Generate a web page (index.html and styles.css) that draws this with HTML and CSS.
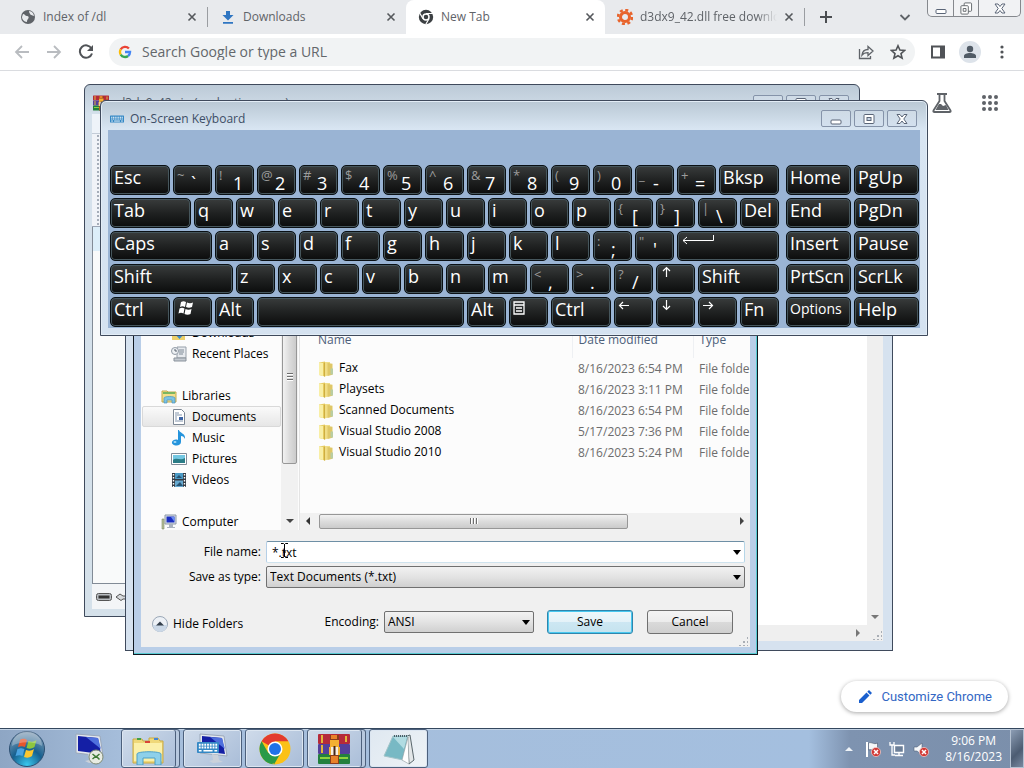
FILE: index.html
```
<!DOCTYPE html>
<html lang="en">
<head>
  <meta charset="UTF-8">
  <meta name="viewport" content="width=device-width, initial-scale=1.0">
  <title>New Tab</title>
  <link rel="stylesheet" href="styles.css">
</head>
<body>
  <!-- shared icons -->
  <svg class="sprite" aria-hidden="true">
    <symbol id="close" viewBox="0 0 10 10"><path d="M1.5 1.5l7 7M8.5 1.5l-7 7" stroke="#55585c" stroke-width="1.6"/></symbol>
    <symbol id="folder" viewBox="0 0 16 16">
      <path d="M1 1.500l6-1v15L1 14z" fill="#e6cc62"/>
      <path d="M1 1.500l4 .5v13L1 14z" fill="#f9efa6"/>
      <path d="M6.500 1H12v13l-5.500 1.500z" fill="#f0dd86"/>
      <path d="M9.500 2l5 .8v11L9.500 15z" fill="#dfc767"/>
      <path d="M6.500 1.500v14" stroke="#cfae40"/>
      <path d="M12.500 7.500h2.500v6h-2.500z" fill="#b9cda2"/>
    </symbol>
    <symbol id="win-min" viewBox="0 0 14 12"><rect x="2" y="7" width="10" height="4" rx="1" fill="#fff" stroke="#5a6577"/></symbol>
    <symbol id="win-max" viewBox="0 0 14 12"><rect x="2" y="1.500" width="10" height="9" rx="1" fill="#fff" stroke="#5a6577"/><rect x="5" y="4.500" width="4" height="3" fill="#c8d6e6" stroke="#5a6577"/></symbol>
    <symbol id="win-close" viewBox="0 0 14 12"><path d="M2 1.500h3l2 2.500 2-2.500h3L8.800 6l3.200 4.500H9L7 8l-2 2.500H2L5.200 6z" fill="#fff" stroke="#5a6577"/></symbol>
    <symbol id="flag" viewBox="0 0 16 16"><path d="M2 1v15" stroke="#fff" stroke-width="2"/><path d="M3.500 2c3-1.500 5 2 9 0v7c-4 2-6-1.500-9 0z" fill="#f4f6f8" stroke="#44536a" stroke-width=".6"/></symbol>
    <symbol id="badge-x" viewBox="0 0 10 10"><circle cx="5" cy="5" r="4.600" fill="#d23a36" stroke="#f3d0cd" stroke-width=".7"/><path d="M3 3l4 4M7 3L3 7" stroke="#fff" stroke-width="1.500"/></symbol>
    <symbol id="books" viewBox="0 0 32 32">
      <rect x="0" y="1" width="32" height="10" rx="1" fill="#b52a3a"/>
      <rect x="0" y="11" width="32" height="10" rx="1" fill="#54409a"/>
      <rect x="0" y="21" width="32" height="10" rx="1" fill="#23803e"/>
      <path d="M4 2v8M4 12v8M28 3v6" stroke="#e3b53a" stroke-width="2"/>
      <path d="M2 25h10M21 25h9" stroke="#8dd33c" stroke-width="2"/>
      <path d="M12 2h9v29h-9z" fill="#8b3d1c"/>
      <path d="M13 2h6v4h-6zM13 23h7v7h-7z" fill="#e8822a"/>
      <path d="M12 7h9v7h-9zM11 14h11v8H11z" fill="#f3b033"/>
      <path d="M13 14h7v8h-7z" fill="#f6eee4"/>
      <path d="M16.500 13v9" stroke="#462716" stroke-width="2"/>
    </symbol>
    <symbol id="monitor" viewBox="0 0 32 32">
      <path d="M3 1l24 2 3 20-27-3z" fill="#e3e8ee" stroke="#9ba8ba"/>
      <path d="M5 3l20 2 3 16L5 18z" fill="#141fa5"/>
      <path d="M13 4l12 1 3 11z" fill="#4f70dd"/>
      <path d="M15 21l6 1 1 5 4 2-10 1-4-2 4-1z" fill="#cbd1da"/>
    </symbol>
    <symbol id="keyboard" viewBox="0 0 24 12">
      <rect width="24" height="12" rx="1" fill="#3488c5"/>
      <path d="M2 3h20M2 6h20" stroke="#fff" stroke-width="2" stroke-dasharray="2 1"/>
      <path d="M2 9.500h3M7 9.500h10M19 9.500h3" stroke="#fff" stroke-width="1.500"/>
    </symbol>
  </svg>

  <div class="desktop">
    <div class="browser">
      <div class="tab-strip">
        <div class="tab">
          <svg class="tab-icon" viewBox="0 0 16 16"><circle cx="8" cy="8" r="7" fill="#5f6368"/><path d="M3 5c2 0 2 2 4 2s2 2 1 3-1 2-1 3c-3 0-5-3-5-5zM9 2c0 2 1 2 1 3s2 1 4 2c0-2-2-5-5-5z" fill="#e8eaed"/></svg>
          <span class="tab-title">Index of /dl</span>
          <button class="tab-close" aria-label="Close tab"><svg><use href="#close"/></svg></button>
        </div>
        <div class="tab divided">
          <svg class="tab-icon" viewBox="0 0 16 16"><path d="M6 2h4v4h3.500L8 11.500 2.500 6H6zM3 13h10v1.800H3z" fill="#2f76c2"/></svg>
          <span class="tab-title">Downloads</span>
          <button class="tab-close" aria-label="Close tab"><svg><use href="#close"/></svg></button>
        </div>
        <div class="tab active">
          <svg class="tab-icon" viewBox="0 0 16 16"><circle cx="8" cy="8" r="7.200" fill="#3c4043"/><path d="M8 4.500h7M5 9.800L1.700 4M11 9.800L7.700 15.500" stroke="#fff" stroke-width="1.200"/><circle cx="8" cy="8" r="3" fill="#3c4043" stroke="#fff" stroke-width="1.500"/></svg>
          <span class="tab-title">New Tab</span>
          <button class="tab-close" aria-label="Close tab"><svg><use href="#close"/></svg></button>
        </div>
        <div class="tab">
          <svg class="tab-icon" viewBox="0 0 16 16"><circle cx="8" cy="8" r="4.500" fill="none" stroke="#e8642c" stroke-width="3"/><circle cx="8" cy="8" r="7" fill="none" stroke="#e8642c" stroke-width="2.600" stroke-dasharray="3 2.500"/></svg>
          <span class="tab-title faded">d3dx9_42.dll free download</span>
          <button class="tab-close" aria-label="Close tab"><svg><use href="#close"/></svg></button>
        </div>
        <button class="new-tab" aria-label="New tab"><svg viewBox="0 0 14 14"><path d="M7 1v12M1 7h12" stroke="#4a4d51" stroke-width="2"/></svg></button>
        <button class="tab-search" aria-label="Search tabs"><svg viewBox="0 0 12 12"><path d="M1.500 4L6 8.500 10.500 4" fill="none" stroke="#5f6368" stroke-width="1.800"/></svg></button>
        <div class="browser-controls">
          <button aria-label="Minimize"><svg><use href="#win-min"/></svg></button>
          <button aria-label="Restore"><svg viewBox="0 0 14 14"><rect x="5" y="1" width="8" height="9" rx="1" fill="#fff" stroke="#5f6368"/><rect x="1.500" y="4" width="8" height="9" rx="1" fill="#fff" stroke="#5f6368"/><path d="M4 7h3v3H4z" fill="none" stroke="#5f6368"/></svg></button>
          <button aria-label="Close"><svg><use href="#win-close"/></svg></button>
        </div>
      </div>

      <div class="toolbar">
        <button aria-label="Back"><svg viewBox="0 0 16 16"><path d="M15 8H2M8 2L2 8l6 6" fill="none" stroke="#b9bcc0" stroke-width="1.800"/></svg></button>
        <button aria-label="Forward"><svg viewBox="0 0 16 16"><path d="M1 8h13M8 2l6 6-6 6" fill="none" stroke="#b9bcc0" stroke-width="1.800"/></svg></button>
        <button aria-label="Reload"><svg viewBox="0 0 16 16"><path d="M13.500 4.500A6.200 6.200 0 1 0 14 9.500" fill="none" stroke="#505357" stroke-width="2"/><path d="M15 1v6H9z" fill="#505357"/></svg></button>
        <div class="omnibox">
          <svg class="google" viewBox="0 0 18 18" fill="none" stroke-width="3"><path d="M14 4.500A6.500 6.500 0 0 0 3.500 5.700" stroke="#ea4335"/><path d="M3.500 5.700a6.500 6.500 0 0 0 0 6.600" stroke="#fbbc05"/><path d="M3.500 12.300a6.500 6.500 0 0 0 9.500 1.800" stroke="#34a853"/><path d="M13 14.100A6.500 6.500 0 0 0 15.500 9H9" stroke="#4285f4"/></svg>
          <input type="text" aria-label="Address" placeholder="Search Google or type a URL">
          <button aria-label="Share"><svg viewBox="0 0 16 16" fill="none" stroke="#5f6368" stroke-width="1.300"><path d="M1.500 5v9.500h11V12"/><path d="M4 11c.5-4 3-5.500 6-5.500V2.500L15 7l-5 4.500V8.700C7.500 8.700 5.500 9 4 11z"/></svg></button>
          <button aria-label="Bookmark"><svg viewBox="0 0 16 16"><path d="M8 1.800l1.900 4.300 4.600.4-3.500 3.100 1.100 4.600L8 11.800l-4.100 2.400L5 9.600 1.500 6.500l4.600-.4z" fill="none" stroke="#505357" stroke-width="1.600"/></svg></button>
        </div>
        <button aria-label="Side panel"><svg viewBox="0 0 16 16"><path d="M2 2.500h12v11H2z" fill="none" stroke="#505357" stroke-width="2"/><path d="M10 2h4v12h-4z" fill="#505357"/></svg></button>
        <button class="profile" aria-label="Profile"><svg viewBox="0 0 16 16" fill="#505b66"><circle cx="8" cy="5" r="3.200"/><path d="M2 14v-2c0-4 12-4 12 0v2z"/></svg></button>
        <button aria-label="Menu"><svg viewBox="0 0 16 16" fill="#505357"><circle cx="8" cy="3" r="1.600"/><circle cx="8" cy="8" r="1.600"/><circle cx="8" cy="13" r="1.600"/></svg></button>
      </div>

      <div class="page">
        <div class="page-links">
          <a href="#" aria-label="Search Labs"><svg viewBox="0 0 22 22"><path d="M6 2h10M8.500 2v7L2.500 18.500c-.5 1 0 1.500 1 1.500h15c1 0 1.500-.5 1-1.500L13.500 9V2" fill="none" stroke="#5f6368" stroke-width="1.800"/><path d="M8 12h2l2 2 3-1 2.500 5h-13z" fill="#5f6368"/></svg></a>
          <a href="#" aria-label="Google apps"><svg viewBox="0 0 22 22" fill="#5f6368"><circle cx="5" cy="5" r="2"/><circle cx="11" cy="5" r="2"/><circle cx="17" cy="5" r="2"/><circle cx="5" cy="11" r="2"/><circle cx="11" cy="11" r="2"/><circle cx="17" cy="11" r="2"/><circle cx="5" cy="17" r="2"/><circle cx="11" cy="17" r="2"/><circle cx="17" cy="17" r="2"/></svg></a>
        </div>
        <button class="customize"><svg viewBox="0 0 16 16"><path d="M2 14v-3l7.500-7.500 3 3L5 14zM10.300 2.700L12 1l3 3-1.700 1.700z" fill="#1a5fce"/></svg>Customize Chrome</button>
      </div>
    </div>

    <!-- archive window -->
    <section class="window archive">
      <header class="titlebar">
        <svg class="title-icon"><use href="#books"/></svg>
        <h2>d3dx9_42.zip (evaluation copy)</h2>
        <div class="controls">
          <button aria-label="Minimize"><svg><use href="#win-min"/></svg></button>
          <button aria-label="Maximize"><svg><use href="#win-max"/></svg></button>
          <button aria-label="Close"><svg><use href="#win-close"/></svg></button>
        </div>
      </header>
      <div class="archive-menu"></div>
      <div class="archive-tools"></div>
      <div class="archive-list"></div>
      <footer class="archive-status">
        <svg viewBox="0 0 16 8"><rect x=".5" y=".5" width="15" height="7" rx="2" fill="#b9bdc1" stroke="#555"/><path d="M2.500 2.500h11v3h-11z" fill="#333"/></svg>
        <svg viewBox="0 0 16 8"><path d="M1 4l4-3 3 2h7v3H8L6 7.500z" fill="#d6d9dc" stroke="#555"/></svg>
      </footer>
    </section>

    <!-- text editor behind the dialog -->
    <section class="window editor">
      <div class="editor-text"></div>
      <div class="editor-vscroll"><i class="arrow down"></i></div>
      <div class="editor-hscroll"><i class="arrow right"></i></div>
      <div class="editor-corner"><div class="grip"></div></div>
    </section>

    <!-- save dialog -->
    <section class="window dialog">
      <div class="explorer">
        <nav class="places">
          <a class="place sub" href="#"><svg viewBox="0 0 16 16"><path d="M1 8h13v7H1z" fill="#ecd06a"/><path d="M6 3h5v5h3l-5.500 6L3 8h3z" fill="#3a8fcb"/></svg>Downloads</a>
          <a class="place sub" href="#"><svg viewBox="0 0 16 16"><path d="M6 1h9v11H6z" fill="#e7eaee" stroke="#97a0aa"/><path d="M8 4h5M8 6h5M8 8h4" stroke="#7f8a96"/><path d="M3 12h12v3H3z" fill="#c4cad1" stroke="#8a929b"/><circle cx="4" cy="5" r="3.500" fill="#eef1f4" stroke="#929ba6"/><path d="M4 3v2h2" fill="none" stroke="#59636e"/></svg>Recent Places</a>
          <a class="place group" href="#"><svg viewBox="0 0 16 16"><path d="M1 3h5l1 1h8v10H1z" fill="#f2df8b" stroke="#c3a94c"/><path d="M2 5h12" stroke="#7bb661" stroke-width="2"/><path d="M3 15v-5c0-2 11-2 11 0v5h-3v-3H6v3z" fill="#7cc3e4" stroke="#4c93bb" stroke-width=".7"/></svg>Libraries</a>
          <a class="place sub selected" href="#"><svg viewBox="0 0 16 16"><path d="M2.500.5h8l3 3v12h-11z" fill="#fff" stroke="#7c8794"/><path d="M4 4h4M4 6h7M4 8h2M4 10h2M4 12h8" stroke="#8294ab"/><path d="M8 8h4v3H8z" fill="#3d64a5"/></svg>Documents</a>
          <a class="place sub" href="#"><svg viewBox="0 0 16 16"><path d="M8 0c0 3 7 3 6 9-1-2-2-3-4-3v6c0 2-2 3.500-4.500 3.500S.5 14 1 12s3.500-3 6-2V0z" fill="#2594dc"/><ellipse cx="4" cy="12" rx="1.500" ry="1" fill="#a7dcf8"/></svg>Music</a>
          <a class="place sub" href="#"><svg viewBox="0 0 16 16"><path d="M.5 2.500h15v11H.5z" fill="#fff" stroke="#808b97"/><path d="M2 4h12v8H2z" fill="#73c7e2"/><path d="M2 9c4-3 7 1 12-2v5H2z" fill="#2a7c86"/></svg>Pictures</a>
          <a class="place sub" href="#"><svg viewBox="0 0 16 16"><path d="M1 1h14v14H1z" fill="#343b44"/><path d="M4 1h8v6H4z" fill="#4b9ac5"/><path d="M4 8.500h8V15H4z" fill="#67a9cf"/><path d="M5 6l3-3 3 3zM5 14l4-4 3 4z" fill="#275372"/><path d="M2.500 2v13M13.500 2v13" stroke="#fff" stroke-width="1.400" stroke-dasharray="1.500 1.500"/></svg>Videos</a>
          <a class="place group" href="#"><svg viewBox="0 0 16 16"><path d="M4 1h11v9H4z" fill="#dce2e9" stroke="#8b97a6"/><path d="M5.500 2.500h8v6h-8z" fill="#1b2fc2"/><path d="M10 3h3.500v5z" fill="#6b8cf0"/><path d="M8 10h4v3h2v1H6v-1h2z" fill="#aab3bf"/><path d="M1 5h2v10H1z" fill="#b7c19a" stroke="#7f8a66" stroke-width=".6"/></svg>Computer</a>
        </nav>
        <div class="vscroll"><div class="thumb"></div><i class="arrow down"></i></div>
        <div class="files">
          <div class="file-table">
            <table>
              <colgroup><col class="col-name"><col class="col-date"><col class="col-type"></colgroup>
              <thead><tr><th>Name</th><th>Date modified</th><th>Type</th></tr></thead>
              <tbody>
                <tr><td><svg><use href="#folder"/></svg>Fax</td><td>8/16/2023 6:54 PM</td><td>File folder</td></tr>
                <tr><td><svg><use href="#folder"/></svg>Playsets</td><td>8/16/2023 3:11 PM</td><td>File folder</td></tr>
                <tr><td><svg><use href="#folder"/></svg>Scanned Documents</td><td>8/16/2023 6:54 PM</td><td>File folder</td></tr>
                <tr><td><svg><use href="#folder"/></svg>Visual Studio 2008</td><td>5/17/2023 7:36 PM</td><td>File folder</td></tr>
                <tr><td><svg><use href="#folder"/></svg>Visual Studio 2010</td><td>8/16/2023 5:24 PM</td><td>File folder</td></tr>
              </tbody>
            </table>
          </div>
          <div class="hscroll"><i class="arrow left"></i><div class="track"><div class="thumb"></div></div><i class="arrow right"></i></div>
        </div>
      </div>
      <form class="save-form">
        <label for="filename">File name:</label>
        <div class="combo"><input id="filename" type="text" value="*.txt"></div>
        <label for="filetype">Save as type:</label>
        <div class="combo"><select id="filetype"><option>Text Documents (*.txt)</option></select></div>
        <div class="form-footer">
          <button type="button" class="hide-folders"><svg viewBox="0 0 16 16"><circle cx="8" cy="8" r="7.500" fill="#edf1f6" stroke="#9aa7b7"/><path d="M1 9h14a7 7 0 0 1-14 0z" fill="#cbd8e7"/><path d="M4 9.500L8 5.500l4 4z" fill="#333e4b"/></svg>Hide Folders</button>
          <label for="encoding">Encoding:</label>
          <div class="combo encoding"><select id="encoding"><option>ANSI</option></select></div>
          <button type="button" class="push default">Save</button>
          <button type="button" class="push">Cancel</button>
        </div>
      </form>
      <div class="grip"></div>
    </section>

    <!-- on-screen keyboard -->
    <section class="window osk">
      <header class="titlebar">
        <svg class="title-icon"><use href="#keyboard"/></svg>
        <h2>On-Screen Keyboard</h2>
        <div class="controls">
          <button aria-label="Minimize"><svg><use href="#win-min"/></svg></button>
          <button aria-label="Maximize"><svg><use href="#win-max"/></svg></button>
          <button aria-label="Close"><svg><use href="#win-close"/></svg></button>
        </div>
      </header>
      <div class="keys">
        <div class="main-keys">
          <button class="key w3">Esc</button>
          <button class="key dual"><sup>~</sup><b>`</b></button>
          <button class="key dual"><sup>!</sup><b>1</b></button>
          <button class="key dual"><sup>@</sup><b>2</b></button>
          <button class="key dual"><sup>#</sup><b>3</b></button>
          <button class="key dual"><sup>$</sup><b>4</b></button>
          <button class="key dual"><sup>%</sup><b>5</b></button>
          <button class="key dual"><sup>^</sup><b>6</b></button>
          <button class="key dual"><sup>&amp;</sup><b>7</b></button>
          <button class="key dual"><sup>*</sup><b>8</b></button>
          <button class="key dual"><sup>(</sup><b>9</b></button>
          <button class="key dual"><sup>)</sup><b>0</b></button>
          <button class="key dual"><sup>_</sup><b>-</b></button>
          <button class="key dual"><sup>+</sup><b>=</b></button>
          <button class="key w3">Bksp</button>

          <button class="key w4">Tab</button>
          <button class="key">q</button>
          <button class="key">w</button>
          <button class="key">e</button>
          <button class="key">r</button>
          <button class="key">t</button>
          <button class="key">y</button>
          <button class="key">u</button>
          <button class="key">i</button>
          <button class="key">o</button>
          <button class="key">p</button>
          <button class="key dual"><sup>{</sup><b>[</b></button>
          <button class="key dual"><sup>}</sup><b>]</b></button>
          <button class="key dual"><sup>|</sup><b>\</b></button>
          <button class="key">Del</button>

          <button class="key w5">Caps</button>
          <button class="key">a</button>
          <button class="key">s</button>
          <button class="key">d</button>
          <button class="key">f</button>
          <button class="key">g</button>
          <button class="key">h</button>
          <button class="key">j</button>
          <button class="key">k</button>
          <button class="key">l</button>
          <button class="key dual"><sup>:</sup><b>;</b></button>
          <button class="key dual"><sup>"</sup><b>'</b></button>
          <button class="key w5" aria-label="Enter"><svg class="enter" viewBox="0 0 34 12"><path d="M32.500 1v5.500H2M6 3L2 6.500 6 10" fill="none" stroke="#fff"/></svg></button>

          <button class="key w6">Shift</button>
          <button class="key">z</button>
          <button class="key">x</button>
          <button class="key">c</button>
          <button class="key">v</button>
          <button class="key">b</button>
          <button class="key">n</button>
          <button class="key">m</button>
          <button class="key dual"><sup>&lt;</sup><b>,</b></button>
          <button class="key dual"><sup>&gt;</sup><b>.</b></button>
          <button class="key dual"><sup>?</sup><b>/</b></button>
          <button class="key" aria-label="Up"><svg viewBox="0 0 12 12"><path d="M6.500 11V1.500M3 5l3.500-3.500L10 5" fill="none" stroke="#fff" stroke-width="1.200"/></svg></button>
          <button class="key w4">Shift</button>

          <button class="key w3">Ctrl</button>
          <button class="key" aria-label="Windows"><svg class="winkey" viewBox="0 0 16 16" fill="#fff"><path d="M3 2c2-1 3-1 5 0L7 7c-2-1-3-1-5 0zM9 2.500c2 1 4 1 6 0L14 7c-2 1-4 1-6 0zM1.500 8.500c2-1 3-1 5 0l-1 5c-2-1-3-1-5 0zM7.500 9c2 1 4 1 6 0l-1 5c-2 1-4 1-6 0z"/></svg></button>
          <button class="key">Alt</button>
          <button class="key w10" aria-label="Space"></button>
          <button class="key">Alt</button>
          <button class="key" aria-label="Context menu"><svg class="menukey" viewBox="0 0 12 14"><path d="M1 1h10v12H1zM1 4h10M3 7h6M3 10h6" fill="none" stroke="#fff" stroke-width="1.300"/></svg></button>
          <button class="key w3">Ctrl</button>
          <button class="key" aria-label="Left"><svg viewBox="0 0 12 12"><path d="M11 6.500H1.500M5 3L1.500 6.500 5 10" fill="none" stroke="#fff" stroke-width="1.200"/></svg></button>
          <button class="key" aria-label="Down"><svg viewBox="0 0 12 12"><path d="M6.500 1v9.500M3 7l3.500 3.500L10 7" fill="none" stroke="#fff" stroke-width="1.200"/></svg></button>
          <button class="key" aria-label="Right"><svg viewBox="0 0 12 12"><path d="M1 6.500h9.500M7 3l3.500 3.500L7 10" fill="none" stroke="#fff" stroke-width="1.200"/></svg></button>
          <button class="key">Fn</button>
        </div>
        <div class="side-keys">
          <button class="key">Home</button>
          <button class="key">PgUp</button>
          <button class="key">End</button>
          <button class="key">PgDn</button>
          <button class="key">Insert</button>
          <button class="key">Pause</button>
          <button class="key">PrtScn</button>
          <button class="key">ScrLk</button>
          <button class="key small">Options</button>
          <button class="key">Help</button>
        </div>
      </div>
    </section>

    <svg class="cursor" viewBox="0 0 9 17"><path d="M1 1.500h2.500l1 1 1-1H8M4.500 2v13M1 15.500h2.500l1-1 1 1H8M3 10h3" fill="none" stroke="#000"/></svg>
  </div>

  <footer class="taskbar">
    <button class="start" aria-label="Start">
      <svg viewBox="0 0 38 38">
        <defs>
          <radialGradient id="orb" cx=".5" cy=".95" r=".9"><stop offset="0" stop-color="#39c8ee"/><stop offset=".5" stop-color="#16608f"/><stop offset="1" stop-color="#7f9bb5"/></radialGradient>
        </defs>
        <circle cx="19" cy="19" r="17.500" fill="url(#orb)" stroke="#2c4f72"/>
        <path d="M12 10c3-2 5-1 7 0l-2 7c-3-1-4-1-7 0z" fill="#e8552c"/>
        <path d="M20.500 11c3 1 5 1 8-1l-2 7c-3 2-5 2-8 1z" fill="#8dc63f"/>
        <path d="M9.500 19c3-1 4-1 7 0l-2 7c-2-1-4-1-7 0z" fill="#4aa3e0"/>
        <path d="M18 20c3 1 5 1 8-1l-2 7c-3 2-5 2-8 1z" fill="#fcc72e"/>
        <path d="M4 16a15 15 0 0 1 30 0c-8-5-22-5-30 0z" fill="#fff" opacity=".28"/>
      </svg>
    </button>
    <div class="tasks">
      <button class="task pinned" aria-label="Remote Desktop"><svg viewBox="0 0 32 32"><use href="#monitor"/><circle cx="23" cy="24" r="7" fill="#e8ece2" stroke="#7f8b77"/><path d="M19.500 21l3 2.500-3 2.500M26.500 21l-3 2.500 3 3" fill="none" stroke="#3e7a35" stroke-width="1.500"/></svg></button>
      <button class="task stacked" aria-label="Explorer"><svg viewBox="0 0 32 32"><path d="M1 6h9l1 2h6V5h9l2 3h3v22H1z" fill="#efd879" stroke="#c9a943"/><path d="M2 10h28v18H2z" fill="#fbf0a9"/><path d="M5 6h4" stroke="#43a047" stroke-width="2"/><path d="M13 9h5" stroke="#d94436" stroke-width="2"/><path d="M22 6h4" stroke="#4285d8" stroke-width="2"/><path d="M5 32V21c0-3 24-3 24 0v11h-6v-7H11v7z" fill="#8ed0ea" stroke="#4d9fc7"/></svg></button>
      <button class="task" aria-label="On-Screen Keyboard"><svg viewBox="0 0 32 32"><use href="#monitor"/><use href="#keyboard" x="0" y="9" width="22" height="11"/></svg></button>
      <button class="task" aria-label="Chrome"><svg viewBox="0 0 32 32"><circle cx="16" cy="16" r="15.500" fill="#fbc116"/><path d="M16 16L2.600 8.200A15.500 15.500 0 0 1 29.400 8.200H16z" fill="#e33b2e"/><path d="M2.600 8.200L9.300 20 16 16v8l-2.500 7.300A15.500 15.500 0 0 1 2.600 8.200z" fill="#2a9a48"/><path d="M22 19.500l-7 12L9 20z" fill="#2a9a48"/><circle cx="16" cy="16" r="7.500" fill="#fff"/><circle cx="16" cy="16" r="6" fill="#1f72e8"/></svg></button>
      <button class="task stacked" aria-label="WinRAR"><svg viewBox="0 0 32 32"><use href="#books"/></svg></button>
      <button class="task current" aria-label="Notepad"><svg viewBox="0 0 32 32"><path d="M24 3l3-1 4 25-5 4z" fill="#e3e7e8" stroke="#59666b"/><path d="M10 3h15l-5 24-19-4z" fill="#78b9c4" stroke="#a3c4c9"/><path d="M10 4h14l-3 12z" fill="#b1dce2"/><path d="M25 4l1 27-7-4z" fill="#fff" stroke="#8b979a" stroke-width=".6"/><path d="M11 3h14" stroke="#4c5d66" stroke-width="2" stroke-dasharray="1 1"/></svg></button>
    </div>
    <div class="tray">
      <button aria-label="Show hidden icons"><svg viewBox="0 0 16 16"><path d="M4 10l4-4 4 4z" fill="#eef3f8"/></svg></button>
      <button aria-label="Action Center"><svg viewBox="0 0 16 16"><use href="#flag"/><use href="#badge-x" x="6" y="6" width="10" height="10"/></svg></button>
      <button aria-label="Network"><svg viewBox="0 0 16 16"><path d="M5.500 4.500h9v7h-9zM10 12v2M6 14.500h8" fill="#6c7f98" stroke="#fff" stroke-width="1.400"/><path d="M1 1v3h4V1M3 4v10h3" fill="none" stroke="#fff" stroke-width="1.300"/></svg></button>
      <button aria-label="Volume"><svg viewBox="0 0 16 16"><path d="M1 6h3l5-4v12l-5-4H1z" fill="#f6f8fa" stroke="#52627a" stroke-width=".6"/><use href="#badge-x" x="6" y="6" width="10" height="10"/></svg></button>
      <div class="clock"><span>9:06 PM</span><span>8/16/2023</span></div>
      <button class="show-desktop" aria-label="Show desktop"></button>
    </div>
  </footer>
</body>
</html>
```

FILE: styles.css
```
* {
  box-sizing: border-box;
}

body {
  margin: 0;
  height: 100vh;
  display: flex;
  flex-direction: column;
  overflow: hidden;
  font-family: "Open Sans", "Noto Sans", sans-serif;
  font-size: 12px;
  line-height: 16px;
  color: #000;
  background: #fff;
}

button, input, select {
  font: inherit;
  color: inherit;
  margin: 0;
  padding: 0;
  border: none;
  background: none;
}

button {
  display: flex;
  align-items: center;
  justify-content: center;
}

svg {
  flex: none;
  width: 16px;
  height: 16px;
}

.sprite {
  position: absolute;
  width: 0;
  height: 0;
}

.desktop {
  flex: 1;
  position: relative;
  min-height: 0;
}

/* browser */
.browser {
  height: 100%;
  display: flex;
  flex-direction: column;
}

.tab-strip {
  display: flex;
  align-items: center;
  height: 34px;
  padding: 0 3px 0 8px;
  background: #e8eaed;
  color: #5f6368;
}

.tab {
  flex: 0 1 199px;
  min-width: 0;
  height: 34px;
  display: flex;
  align-items: center;
  gap: 7px;
  padding: 0 10px 0 12px;
}

.tab.divided {
  border-left: 1px solid #9a9da1;
  border-image: linear-gradient(transparent 8px, #9a9da1 8px, #9a9da1 26px, transparent 26px) 1;
}

.tab.active {
  background: #fff;
  border-radius: 8px 8px 0 0;
}

.tab-title {
  flex: 1;
  overflow: hidden;
  white-space: nowrap;
}

.tab-title.faded {
  mask-image: linear-gradient(90deg, #000 85%, transparent);
}

.tab-close svg {
  width: 10px;
  height: 10px;
}

.new-tab {
  height: 18px;
  padding: 0 14px;
  border-left: 1px solid #9a9da1;
}

.new-tab svg {
  width: 14px;
  height: 14px;
}

.tab-search {
  margin-left: auto;
  margin-right: 16px;
}

.tab-search svg {
  width: 12px;
  height: 12px;
}

.browser-controls {
  align-self: flex-start;
  display: flex;
  height: 17px;
  border: 1px solid #85888d;
  border-top: none;
  border-radius: 0 0 5px 5px;
  background: #f1f2f4;
}

.browser-controls button {
  width: 25px;
}

.browser-controls button + button {
  border-left: 1px solid #85888d;
}

.browser-controls button:last-child {
  width: 42px;
}

.browser-controls svg {
  width: 14px;
  height: 13px;
}

.toolbar {
  display: flex;
  align-items: center;
  gap: 16px;
  height: 37px;
  padding: 0 14px;
  border-bottom: 1px solid #dadce0;
}

.omnibox {
  flex: 1;
  display: flex;
  align-items: center;
  gap: 16px;
  height: 28px;
  margin: 0 -1px;
  padding: 0 9px;
  border-radius: 14px;
  background: #f1f3f4;
}

.omnibox .google {
  width: 14px;
  height: 14px;
  margin-right: -6px;
}

.omnibox input {
  flex: 1;
  min-width: 0;
  font-size: 14px;
}

.omnibox input::placeholder {
  color: #63676b;
}

.profile {
  width: 22px;
  height: 22px;
  margin: 0 -3px;
  border-radius: 50%;
  background: #dde3ea;
}

.page {
  flex: 1;
  display: flex;
  flex-direction: column;
  justify-content: space-between;
  align-items: flex-end;
  padding: 21px 16px 16px;
}

.page-links {
  display: flex;
  gap: 26px;
  padding-right: 7px;
}

.page-links svg {
  display: block;
  width: 22px;
  height: 22px;
}

.customize {
  gap: 8px;
  height: 31px;
  padding: 0 16px;
  border-radius: 16px;
  background: #fff;
  box-shadow: 0 1px 4px rgba(0, 0, 0, 0.35);
  color: #3367c4;
  font-family: Roboto, sans-serif;
  font-size: 13px;
}

/* windows */
.window {
  position: absolute;
  border: 1px solid #3f4a5c;
  background: #d6e2ef;
}

.titlebar {
  display: flex;
  align-items: center;
  gap: 6px;
  color: #3d4e66;
}

.titlebar h2 {
  flex: 1;
  margin: 0;
  font-size: 12px;
  font-weight: normal;
}

.controls {
  display: flex;
  gap: 3px;
}

.controls button {
  width: 30px;
  height: 17px;
  border: 1px solid #8593a9;
  border-radius: 2px;
  background: linear-gradient(#cfdbe6, #d3e0ee);
}

.controls svg {
  width: 14px;
  height: 12px;
}

.arrow {
  width: 0;
  height: 0;
  border: 4px solid transparent;
}

.arrow.down {
  border-top-color: #444;
  border-bottom: none;
}

.arrow.left {
  border-right-color: #333;
  border-left: none;
}

.arrow.right {
  border-left-color: #444;
  border-right: none;
}

.grip {
  width: 10px;
  height: 10px;
  background: radial-gradient(circle, #a9aeb5 1px, transparent 1px) 0 0 / 4px 4px;
  clip-path: polygon(100% 0, 100% 100%, 0 100%);
}

.archive {
  left: 84px;
  top: 84px;
  width: 776px;
  height: 533px;
  display: flex;
  flex-direction: column;
  padding: 0 7px 7px;
  border-radius: 6px 6px 0 0;
  background: linear-gradient(#bccad7, #d5e1ec 30px, #d5e1ea);
}

.archive .titlebar {
  height: 29px;
  padding: 7px 3px 0 1px;
  color: #4c5866;
}

.archive .title-icon {
  margin-right: 3px;
}

.archive-menu {
  height: 19px;
  background: #eef3f9;
}

.archive-tools {
  height: 94px;
  border-top: 1px solid #c3ccd7;
  border-bottom: 1px solid #9aa5b5;
  background: radial-gradient(circle, #a5adb9 1px, transparent 1px) 4px 0 / 4px 4px repeat-y, #f0f3f8;
}

.archive-list {
  flex: 1;
  border: 1px solid #828b96;
  border-top: none;
  background: linear-gradient(#dceef9 24px, #f9fafa 24px);
}

.archive-status {
  display: flex;
  align-items: center;
  gap: 3px;
  height: 25px;
  padding-left: 4px;
  background: #f3f5f7;
}

.archive-status svg {
  height: 8px;
}

.editor {
  left: 125px;
  top: 250px;
  width: 768px;
  height: 401px;
  display: grid;
  grid-template: 1fr 16px / 1fr 16px;
  padding: 0 9px 9px 7px;
}

.editor-text {
  background: #fff;
}

.editor-vscroll,
.editor-hscroll,
.editor-corner {
  display: flex;
  align-items: flex-end;
  justify-content: center;
  padding: 6px;
  background: #efefef;
}

.editor-hscroll {
  align-items: center;
  justify-content: flex-end;
  padding: 4px 7px;
}

.editor-corner {
  justify-content: flex-end;
  padding: 1px;
}

.editor .arrow {
  opacity: 0.7;
}

/* save dialog */
.dialog {
  left: 133px;
  top: 281px;
  width: 625px;
  padding: 7px;
  border: 1px solid #101820;
  background: #b9cee8;
  box-shadow: inset -1px -1px 0 #58cbd2;
}

.explorer {
  display: flex;
  height: 241px;
  background: #fcfcfc;
  overflow: hidden;
}

.places {
  width: 140px;
  padding: 33px 0 0 1px;
}

.place {
  display: flex;
  align-items: center;
  gap: 5px;
  height: 21px;
  border: 1px solid transparent;
  color: #000;
  text-decoration: none;
  white-space: nowrap;
}

.place.sub {
  padding-left: 28px;
}

.place.group {
  margin-top: 21px;
  padding-left: 18px;
}

.place.selected {
  border-color: #d9d9d9;
  border-radius: 2px;
  background: linear-gradient(#fafafa, #e6e6e6);
}

.vscroll {
  width: 17px;
  display: flex;
  flex-direction: column;
  align-items: center;
  justify-content: space-between;
  padding-bottom: 7px;
  background: #f1f1f1;
}

.thumb {
  display: flex;
  align-items: center;
  justify-content: center;
  border: 1px solid #979797;
  border-radius: 2px;
  background: linear-gradient(#f2f2f2, #dcdcdc 50%, #cbcbcb);
}

.thumb::after {
  content: "";
  width: 8px;
  height: 6px;
  background: repeating-linear-gradient(90deg, #6e6e6e 0 1px, #fff 1px 2px, transparent 2px 3px);
}

.vscroll .thumb {
  width: 15px;
  height: 175px;
  background: linear-gradient(90deg, #f2f2f2, #dcdcdc 50%, #cbcbcb);
}

.vscroll .thumb::after {
  width: 6px;
  height: 8px;
  background: repeating-linear-gradient(#6e6e6e 0 1px, #fff 1px 2px, transparent 2px 3px);
}

.files {
  flex: 1;
  min-width: 0;
  display: flex;
  flex-direction: column;
  margin-left: 1px;
  border-left: 1px solid #e4e4e4;
}

.file-table {
  flex: 1;
  overflow: hidden;
  padding-left: 12px;
}

.file-table table {
  width: 500px;
  table-layout: fixed;
  border-collapse: collapse;
}

.col-name {
  width: 260px;
}

.col-date {
  width: 121px;
}

.file-table th {
  padding: 43px 0 10px 6px;
  border-right: 1px solid #eef0f3;
  color: #4c607a;
  font-weight: normal;
  text-align: left;
}

.file-table td {
  height: 21px;
  padding: 0 0 0 6px;
  color: #6d6d6d;
  white-space: nowrap;
}

.file-table td:first-child {
  color: #000;
}

.file-table td svg {
  margin-right: 5px;
  vertical-align: middle;
}

.hscroll {
  display: flex;
  align-items: center;
  height: 17px;
  padding: 0 6px 1px;
  background: #f1f1f1;
}

.track {
  flex: 1;
  margin: 0 9px;
}

.hscroll .thumb {
  width: 75%;
  height: 15px;
}

.save-form {
  display: grid;
  grid-template-columns: 120px 1fr;
  column-gap: 5px;
  row-gap: 3px;
  align-items: center;
  padding: 11px 5px 13px 0;
  background: #f0f0f0;
}

.save-form label {
  text-align: right;
}

.combo {
  position: relative;
}

.combo::after {
  content: "";
  position: absolute;
  top: 9px;
  right: 4px;
  border: 4px solid transparent;
  border-top: 5px solid #000;
  border-bottom: none;
  pointer-events: none;
}

.combo input,
.combo select {
  display: block;
  width: 100%;
  height: 22px;
  padding: 0 3px;
  border: 1px solid #707070;
  border-radius: 2px;
  appearance: none;
  background: linear-gradient(#f2f2f2, #e3e3e3 50%, #d0d0d0);
}

.combo input {
  padding: 0 5px;
  border-color: #6e8fa5 #b5d6e8 #cfe3ee #b5cfe7;
  background: #fff;
}

.form-footer {
  grid-column: 1 / -1;
  display: flex;
  align-items: center;
  padding: 19px 12px 0 11px;
}

.hide-folders {
  gap: 5px;
  margin-right: auto;
  padding-top: 4px;
}

.encoding {
  width: 150px;
  margin: 0 13px 0 5px;
}

.push {
  width: 86px;
  height: 24px;
  border: 1px solid #707070;
  border-radius: 3px;
  background: linear-gradient(#f4f4f4, #ececec 50%, #dadada 50%, #cfcfcf);
}

.push.default {
  margin-right: 14px;
  border-color: #2f86ad;
  background: linear-gradient(#eef8fb, #e4f2f8 50%, #cde7f3 50%, #c5e3ee);
  box-shadow: inset 0 0 0 1px #48c8f0;
}

.dialog > .grip {
  position: absolute;
  right: 9px;
  bottom: 8px;
}

/* on-screen keyboard */
.osk {
  left: 100px;
  top: 100px;
  width: 828px;
  padding: 0 7px 7px;
  border-radius: 6px 6px 0 0;
  background: linear-gradient(#b9c8d4, #d8e5f2 28px, #d5e2f0);
  box-shadow: inset 0 0 0 1px #e3edf6;
}

.osk .titlebar {
  height: 29px;
  padding: 6px 3px 0 2px;
}

.osk .title-icon {
  width: 14px;
  height: 8px;
}

.keys {
  display: grid;
  grid-template-columns: 669fr 133fr;
  gap: 7px;
  padding: 35px 1px 1px 2px;
  background: #9ab4d4;
}

.main-keys,
.side-keys {
  display: grid;
  gap: 3px;
  grid-auto-rows: 30px;
}

/* one column is half a key */
.main-keys {
  grid-template-columns: repeat(32, minmax(0, 1fr));
}

.side-keys {
  grid-template-columns: 1fr 1fr;
}

.key {
  display: flex;
  align-items: flex-start;
  justify-content: flex-start;
  min-width: 0;
  padding: 0 3px;
  border: 1px solid #0a1014;
  border-radius: 5px;
  background: linear-gradient(#393c3c, #202222 50%, #0b0c0c);
  box-shadow: inset 0 0 0 1px #46565c;
  color: #fff;
  font-size: 18px;
  line-height: 22px;
}

.main-keys .key {
  grid-column: span 2;
}

.main-keys .w3 { grid-column: span 3; }
.main-keys .w4 { grid-column: span 4; }
.main-keys .w5 { grid-column: span 5; }
.main-keys .w6 { grid-column: span 6; }
.main-keys .w10 { grid-column: span 10; }

.key.small {
  font-size: 14px;
}

.dual sup {
  width: 14px;
  color: #9c9c9c;
  font-size: 13px;
  line-height: 18px;
  text-align: left;
}

.dual b {
  font-weight: normal;
  padding-top: 6px;
}

.key svg {
  width: 12px;
  height: 14px;
}

.key .enter {
  width: 34px;
  height: 12px;
  margin-top: 2px;
}

.key .winkey {
  width: 16px;
  height: 16px;
  margin: 2px 0 0 1px;
}

.key .menukey {
  margin-top: 3px;
}

.cursor {
  position: absolute;
  left: 280px;
  top: 542px;
  width: 9px;
  height: 17px;
}

/* taskbar */
.taskbar {
  position: relative;
  display: flex;
  height: 40px;
  border-top: 1px solid #34475e;
  background: linear-gradient(90deg, #8ea6c4, #a6bedb 12%, #a4bfdf 79%, #7e93b0 83%, #7b8fab);
  box-shadow: inset 0 1px 0 #c3d3e5;
}

.start {
  width: 54px;
}

.start svg {
  width: 38px;
  height: 38px;
}

.tasks {
  flex: 1;
  display: flex;
  gap: 3px;
  padding-left: 5px;
}

.task {
  width: 59px;
  height: 39px;
  border: 1px solid #4c607c;
  border-radius: 3px;
  background: linear-gradient(135deg, #cfdbea, #a9bdd8);
  box-shadow: inset 0 0 0 1px #dce6f1;
}

.task svg {
  width: 32px;
  height: 32px;
}

.task.pinned {
  border-color: transparent;
  background: none;
  box-shadow: none;
}

.task.stacked {
  padding-right: 5px;
  box-shadow: inset -3px 0 0 #b7c8de, inset -4px 0 0 #4c607c, inset 0 0 0 1px #dce6f1;
}

.task.current {
  background: linear-gradient(135deg, #dfe8f1, #eef3f6);
}

.tray {
  display: flex;
  align-items: center;
  gap: 8px;
  color: #fff;
}

.clock {
  display: flex;
  flex-direction: column;
  align-items: center;
  margin-left: 8px;
}

.show-desktop {
  align-self: stretch;
  width: 14px;
  border: 1px solid #b4c1d1;
  background: linear-gradient(135deg, #8c9db4, #4c5c72 60%, #7889a0);
}
```
